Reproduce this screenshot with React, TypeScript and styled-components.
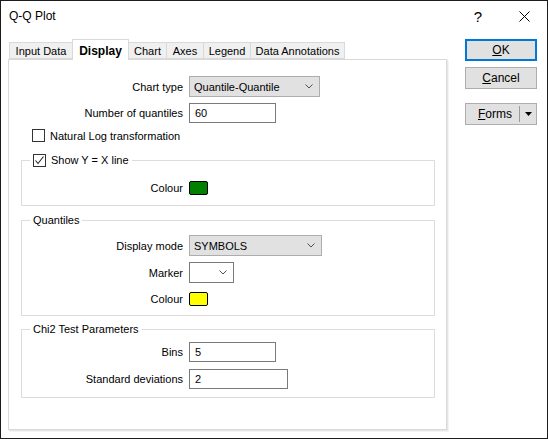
import React from "react";
import styled, { createGlobalStyle } from "styled-components";

const GlobalStyle = createGlobalStyle`
  html, body {
    margin: 0;
    padding: 0;
    background: #fff;
  }
  body {
    font-family: "Liberation Sans", Arial, sans-serif;
    font-size: 11px;
    color: #000;
  }
  * {
    box-sizing: border-box;
  }
`;

const Window = styled.div`
  width: 548px;
  height: 439px;
  border: 1px solid #1c1c1c;
  background: #fff;
  display: flex;
  flex-direction: column;
`;

const TitleBar = styled.div`
  height: 30px;
  display: flex;
  align-items: center;
  padding-left: 8px;
`;

const Title = styled.div`
  flex: 1;
  font-size: 12px;
`;

const TitleButton = styled.div`
  width: 46px;
  height: 30px;
  display: flex;
  align-items: center;
  justify-content: center;
  font-size: 15px;
`;

const Body = styled.div`
  display: flex;
  padding: 8px 0 0 7px;
`;

const LeftColumn = styled.div`
  width: 440px;
  display: flex;
  flex-direction: column;
`;

const TabStrip = styled.div`
  height: 20px;
  display: flex;
  align-items: flex-end;
  padding-left: 1px;
`;

const Tab = styled.div<{ $width: number; $active?: boolean }>`
  position: relative;
  width: ${(p) => p.$width}px;
  height: ${(p) => (p.$active ? 21 : 17)}px;
  margin-bottom: ${(p) => (p.$active ? -1 : 0)}px;
  margin-left: -1px;
  padding-top: ${(p) => (p.$active ? 1 : 0)}px;
  border: 1px solid #d9d9d9;
  border-bottom: ${(p) => (p.$active ? "none" : "1px solid #d9d9d9")};
  background: ${(p) => (p.$active ? "#fff" : "#f0f0f0")};
  font-weight: ${(p) => (p.$active ? 700 : 400)};
  font-size: ${(p) => (p.$active ? 12 : 11)}px;
  z-index: ${(p) => (p.$active ? 2 : 1)};
  display: flex;
  align-items: center;
  justify-content: center;
  white-space: nowrap;

  &:first-child {
    margin-left: 0;
  }
`;

const Panel = styled.div`
  flex-shrink: 0;
  width: 439px;
  height: 371px;
  border: 1px solid #d9d9d9;
  box-shadow: 1px 1px 0 #e6e6e6, 2px 2px 0 #f3f3f3;
  padding: 16px 11px 0 12px;
  display: flex;
  flex-direction: column;
`;

const Row = styled.div<{ $gap?: number }>`
  display: flex;
  align-items: center;
  margin-top: ${(p) => p.$gap ?? 0}px;
`;

const Label = styled.div<{ $width: number }>`
  width: ${(p) => p.$width}px;
  margin-right: 6px;
  text-align: right;
  white-space: nowrap;
`;

const TextBox = styled.div<{ $width: number }>`
  width: ${(p) => p.$width}px;
  height: 20px;
  border: 1px solid #7a7a7a;
  background: #fff;
  padding-left: 5px;
  display: flex;
  align-items: center;
`;

const Select = styled.div<{ $width: number; $plain?: boolean }>`
  width: ${(p) => p.$width}px;
  height: 21px;
  border: 1px solid ${(p) => (p.$plain ? "#7a7a7a" : "#adadad")};
  background: ${(p) => (p.$plain ? "#fff" : "#e1e1e1")};
  padding: 0 6px 0 4px;
  display: flex;
  align-items: center;
  justify-content: space-between;
`;

const CheckRow = styled.div<{ $gap?: number }>`
  display: flex;
  align-items: center;
  gap: 5px;
  margin-top: ${(p) => p.$gap ?? 0}px;
  margin-left: 11px;
`;

const Box = styled.div`
  width: 13px;
  height: 13px;
  border: 1px solid #333;
  background: #fff;
  display: flex;
  align-items: center;
  justify-content: center;
`;

const Group = styled.div<{ $gap: number; $pad: string }>`
  position: relative;
  margin-top: ${(p) => p.$gap}px;
  border: 1px solid #dcdcdc;
  padding: ${(p) => p.$pad};
  display: flex;
  flex-direction: column;
`;

const Legend = styled.div`
  position: absolute;
  top: -8px;
  left: 8px;
  padding: 0 3px;
  background: #fff;
  display: flex;
  align-items: center;
  gap: 5px;
  line-height: 14px;
`;

const Swatch = styled.div<{ $color: string }>`
  width: 19px;
  height: 14px;
  border: 1px solid #000;
  border-radius: 2px;
  background: ${(p) => p.$color};
`;

const ButtonColumn = styled.div`
  margin-left: 17px;
  width: 72px;
  display: flex;
  flex-direction: column;
`;

const Button = styled.div<{ $default?: boolean; $gap: number }>`
  height: 22px;
  margin-top: ${(p) => p.$gap}px;
  background: #e1e1e1;
  border: ${(p) => (p.$default ? "2px solid #0078d7" : "1px solid #adadad")};
  display: flex;
  align-items: center;
  justify-content: center;
  font-size: 12px;

  u {
    text-decoration: underline;
    text-underline-offset: 1px;
  }
`;

const SplitButton = styled(Button)`
  justify-content: flex-end;
  padding-right: 4px;
`;

const SplitDivider = styled.div`
  width: 1px;
  height: 16px;
  background: #9a9a9a;
  margin: 0 5px 0 7px;
`;

const Chevron = () => (
  <svg width="8" height="5" viewBox="0 0 8 5">
    <path d="M0.5 0.5 L4 4 L7.5 0.5" fill="none" stroke="#505050" strokeWidth="1" />
  </svg>
);

const Check = () => (
  <svg width="11" height="11" viewBox="0 0 11 11">
    <path d="M1.5 5.5 L4 8.5 L9.5 1.5" fill="none" stroke="#222" strokeWidth="1.1" />
  </svg>
);

const CloseIcon = () => (
  <svg width="11" height="11" viewBox="0 0 11 11">
    <path d="M0.5 0.5 L10.5 10.5 M10.5 0.5 L0.5 10.5" stroke="#000" strokeWidth="1" />
  </svg>
);

const DownArrow = () => (
  <svg width="7" height="4" viewBox="0 0 7 4">
    <path d="M0 0 L7 0 L3.5 4 Z" fill="#000" />
  </svg>
);

const tabs = [
  { name: "Input Data", width: 64 },
  { name: "Display", width: 57, active: true },
  { name: "Chart", width: 39 },
  { name: "Axes", width: 38 },
  { name: "Legend", width: 48 },
  { name: "Data Annotations", width: 95 },
];

export default function App() {
  return (
    <>
      <GlobalStyle />
      <Window>
        <TitleBar>
          <Title>Q-Q Plot</Title>
          <TitleButton>?</TitleButton>
          <TitleButton>
            <CloseIcon />
          </TitleButton>
        </TitleBar>
        <Body>
          <LeftColumn>
            <TabStrip>
              {tabs.map((t) => (
                <Tab key={t.name} $width={t.width} $active={t.active}>
                  {t.name}
                </Tab>
              ))}
            </TabStrip>
            <Panel>
              <Row>
                <Label $width={162}>Chart type</Label>
                <Select $width={131}>
                  <span>Quantile-Quantile</span>
                  <Chevron />
                </Select>
              </Row>
              <Row $gap={6}>
                <Label $width={162}>Number of quantiles</Label>
                <TextBox $width={87}>60</TextBox>
              </Row>
              <CheckRow $gap={6}>
                <Box />
                <span>Natural Log transformation</span>
              </CheckRow>

              <Group $gap={18} $pad="20px 0 10px 0">
                <Legend>
                  <Box>
                    <Check />
                  </Box>
                  <span>Show Y = X line</span>
                </Legend>
                <Row>
                  <Label $width={161}>Colour</Label>
                  <Swatch $color="#008000" />
                </Row>
              </Group>

              <Group $gap={14} $pad="14px 0 9px 0">
                <Legend>Quantiles</Legend>
                <Row>
                  <Label $width={161}>Display mode</Label>
                  <Select $width={133}>
                    <span>SYMBOLS</span>
                    <Chevron />
                  </Select>
                </Row>
                <Row $gap={6}>
                  <Label $width={161}>Marker</Label>
                  <Select $width={45} $plain>
                    <span />
                    <Chevron />
                  </Select>
                </Row>
                <Row $gap={9}>
                  <Label $width={161}>Colour</Label>
                  <Swatch $color="#ffff00" />
                </Row>
              </Group>

              <Group $gap={13} $pad="12px 0 8px 0">
                <Legend>Chi2 Test Parameters</Legend>
                <Row>
                  <Label $width={161}>Bins</Label>
                  <TextBox $width={87}>5</TextBox>
                </Row>
                <Row $gap={7}>
                  <Label $width={161}>Standard deviations</Label>
                  <TextBox $width={99}>2</TextBox>
                </Row>
              </Group>
            </Panel>
          </LeftColumn>
          <ButtonColumn>
            <Button $default $gap={0}>
              <span>
                <u>O</u>K
              </span>
            </Button>
            <Button $gap={6}>
              <span>
                <u>C</u>ancel
              </span>
            </Button>
            <SplitButton $gap={14}>
              <span>
                <u>F</u>orms
              </span>
              <SplitDivider />
              <DownArrow />
            </SplitButton>
          </ButtonColumn>
        </Body>
      </Window>
    </>
  );
}
